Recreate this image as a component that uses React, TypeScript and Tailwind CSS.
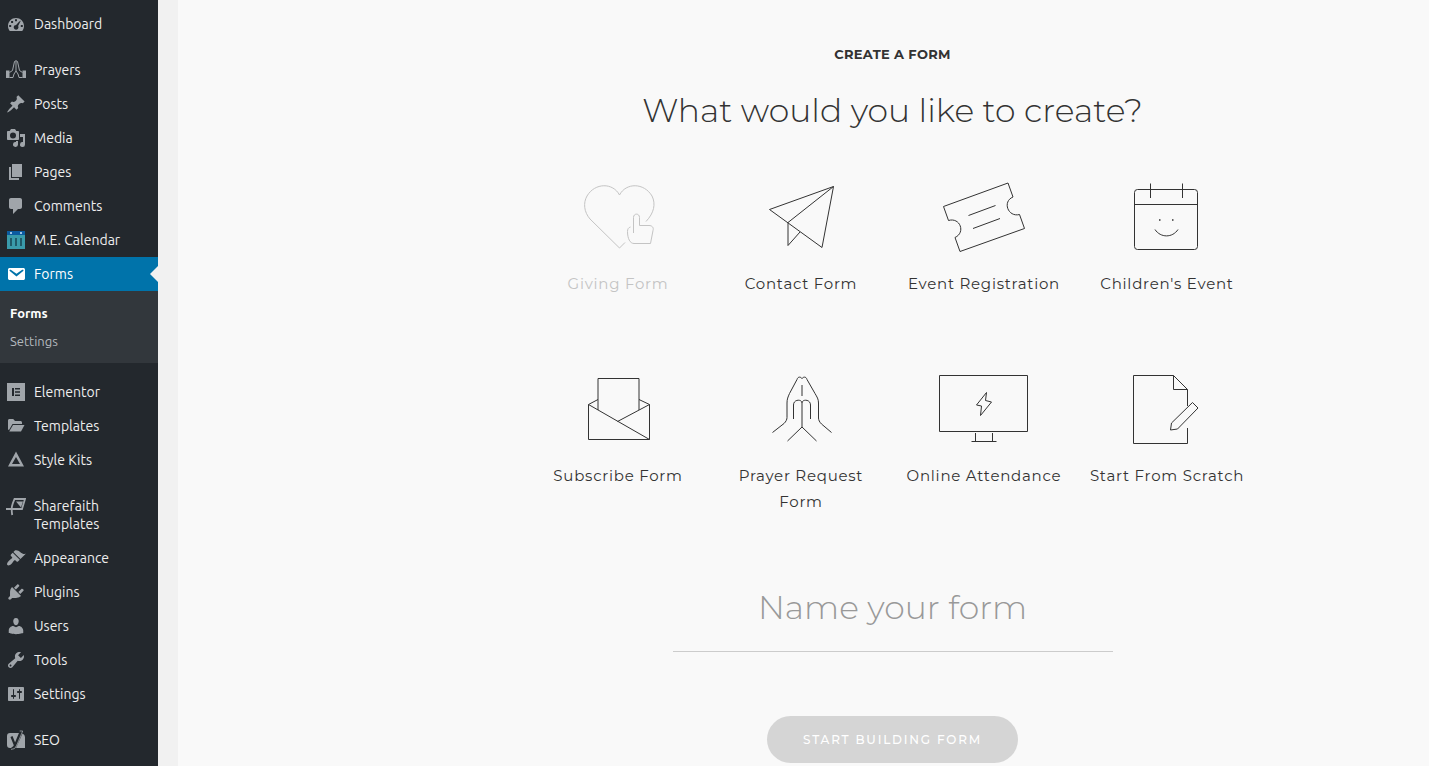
import type { ReactNode } from "react";

type IconProps = { children: ReactNode };

/* ---------- SIDEBAR ICONS (20x20 grid) ---------- */

function MenuIcon({ children }: IconProps) {
  return (
    <svg
      viewBox="0 0 20 20"
      className="h-5 w-5 shrink-0"
      fill="currentColor"
      aria-hidden="true"
    >
      {children}
    </svg>
  );
}

const DashboardIcon = (
  <MenuIcon>
    <path
      fillRule="evenodd"
      d="M3.8 17h12.4c1.1-1.5 1.8-3.2 1.8-5.1C18 7.500 14.400 4 10 4S2 7.500 2 11.900c0 1.900.700 3.700 1.800 5.100zM9 5.200h2v2H9zM5.100 7h2v2h-2zM3.200 11h2v2h-2zm11.600 0h2v2h-2zM13 7.800l1.900-1.200-2.800 5.400c.6.900.5 2.200-.3 3-.9.900-2.500.9-3.400 0s-.9-2.500 0-3.400c.5-.5 1.100-.7 1.700-.7z"
    />
  </MenuIcon>
);

const PrayersIcon = (
  <MenuIcon>
    <path d="M0 10.500h3.500V18H0zM16.500 10.500H20V18h-3.500z" />
    <path
      fill="none"
      stroke="currentColor"
      strokeWidth="1"
      d="M3.500 12.500 6.500 10.500 8.500 1.500Q9 .5 10 1v10L8 14l-1 3.500H3.500M16.500 12.500l-3-2L11.500 1.500Q11 .5 10 1M10 11l2 3 1 3.500h3.500"
    />
  </MenuIcon>
);

const PostsIcon = (
  <MenuIcon>
    <path d="M10.440 3.020l1.820-1.820 6.360 6.350-1.830 1.820c-1.050-.680-2.480-.570-3.410.360l-.750.750c-.920.930-1.040 2.350-.350 3.410l-1.830 1.820-2.410-2.410-2.800 2.790c-.420.420-3.380 2.710-3.800 2.290s1.860-3.390 2.280-3.810l2.790-2.790L4.100 9.360l1.830-1.820c1.050.690 2.480.570 3.400-.360l.750-.750c.930-.920 1.050-2.350.360-3.410z" />
  </MenuIcon>
);

const MediaIcon = (
  <MenuIcon>
    <path
      fillRule="evenodd"
      d="M13 11V4c0-.550-.450-1-1-1h-1.670L9 1H5L3.670 3H2c-.550 0-1 .450-1 1v7c0 .550.450 1 1 1h10c.550 0 1-.450 1-1zM7 4.500a3 3 0 1 0 0 6 3 3 0 0 0 0-6z"
    />
    <path d="M14 6h5v10.500a2.500 2.500 0 1 1-2-2.450V9h-3zM12 13v3.500A2.500 2.500 0 1 1 10 14v-1z" />
  </MenuIcon>
);

const PagesIcon = (
  <MenuIcon>
    <path d="M6 15V2h10v13H6zm-1 1h8v2H3V5h2v11z" />
  </MenuIcon>
);

const CommentsIcon = (
  <MenuIcon>
    <path d="M5 2h9c1.100 0 2 .900 2 2v7c0 1.100-.900 2-2 2h-2l-5 5v-5H5c-1.100 0-2-.900-2-2V4c0-1.100.900-2 2-2z" />
  </MenuIcon>
);

const CalendarIcon = (
  <MenuIcon>
    <path fill="#0b5ba0" d="M1 1h18v4H1z" />
    <path fill="#3a9bab" d="M1 5h18v14H1z" />
    <path fill="#9ec3e6" d="M4 2h2v2H4zM14 2h2v2h-2z" />
    <path fill="#1f5a69" d="M4 8h2v8H4zM9 8h2v8H9zM14 8h2v8h-2z" />
  </MenuIcon>
);

const FormsIcon = (
  <MenuIcon>
    <path d="M3.870 4h13.250C18.370 4 19 4.590 19 5.790v8.420c0 1.190-.630 1.790-1.880 1.790H3.870c-1.250 0-1.880-.600-1.880-1.790V5.790c0-1.200.630-1.790 1.880-1.790zm6.620 8.600l6.740-5.530c.240-.200.430-.660.130-1.070-.290-.410-.820-.420-1.170-.170l-5.700 3.860L4.800 5.830c-.350-.250-.880-.240-1.170.170-.300.410-.110.870.130 1.070z" />
  </MenuIcon>
);

const ElementorIcon = (
  <MenuIcon>
    <path
      fillRule="evenodd"
      d="M1 1h18v18H1zM6 6v8h2V6zm3 0v1.600h5V6zm0 3.200v1.600h5V9.200zm0 3.200V14h5v-1.600z"
    />
  </MenuIcon>
);

const TemplatesIcon = (
  <MenuIcon>
    <path d="M2 13.500V4.500C2 3.700 2.600 3 3.500 3h3.700L9 5h5.500c.8 0 1.500.7 1.500 1.500V8H6.500L3 14z" />
    <path d="M7 9h11.500L15 15.500H3.200z" />
  </MenuIcon>
);

const StyleKitsIcon = (
  <MenuIcon>
    <path fillRule="evenodd" d="M10 1.500l8 15H2zm0 5.500L6 14h8z" />
  </MenuIcon>
);

const SharefaithIcon = (
  <MenuIcon>
    <path
      fill="none"
      stroke="currentColor"
      strokeWidth="1.800"
      d="M0 13h16L19 3H8.500C6 9 5 11 6.200 19"
    />
    <path d="M10 5.500h7l-2 6z" />
  </MenuIcon>
);

const AppearanceIcon = (
  <MenuIcon>
    <path d="M14.480 11.060L7.410 3.990l1.500-1.500c.5-.56 2.300-.47 3.510.32 1.210.8 1.430 1.280 2.910 2.100 1.180.64 2.450 1.260 4.450.85zm-.71.71L6.700 4.700 4.930 6.470c-.39.390-.39 1.020 0 1.410l1.060 1.060c.39.390.39 1.030 0 1.420-.6.600-1.430 1.110-2.210 1.690-.35.260-.7.530-1.010.84C1.430 14.230.4 16.080 1.400 17.070c.99 1 2.840-.03 4.180-1.360.31-.31.58-.66.850-1.020.57-.78 1.080-1.610 1.690-2.210.39-.39 1.020-.39 1.410 0l1.060 1.060c.39.390 1.020.39 1.410 0z" />
  </MenuIcon>
);

const PluginsIcon = (
  <MenuIcon>
    <path d="M13.110 4.360L9.870 7.600 8 5.730l3.240-3.240c.35-.34 1.050-.2 1.560.32.520.51.660 1.210.310 1.550zm-8 1.770l.91-1.120 9.010 9.010-1.190.84c-.71.710-2.630 1.160-3.820 1.160H6.140L4.900 17.260c-.59.590-1.540.59-2.120 0-.59-.58-.59-1.530 0-2.120l1.240-1.240v-3.880c0-1.130.400-3.190 1.090-3.890zm7.260 3.970l3.240-3.240c.34-.35 1.040-.21 1.550.31.520.51.660 1.210.31 1.550l-3.240 3.250z" />
  </MenuIcon>
);

const UsersIcon = (
  <MenuIcon>
    <path d="M10 9.250c-2.270 0-2.730-3.440-2.730-3.440C7 4.020 7.820 2 9.970 2c2.160 0 2.980 2.020 2.710 3.810 0 0-.41 3.440-2.680 3.440z" />
    <path d="M10 11.300L12.720 10c2.390 0 4.520 2.330 4.520 4.530v2.490s-3.650 1.130-7.240 1.130c-3.650 0-7.240-1.130-7.240-1.130v-2.490c0-2.250 1.940-4.480 4.470-4.480z" />
  </MenuIcon>
);

const ToolsIcon = (
  <MenuIcon>
    <path
      fillRule="evenodd"
      d="M16.680 9.770c-1.340 1.340-3.300 1.670-4.950.99l-5.410 6.520c-.99.99-2.590.99-3.580 0s-.99-2.590 0-3.570l6.520-5.420c-.68-1.650-.35-3.610.99-4.950 1.280-1.280 3.120-1.620 4.720-1.060l-2.890 2.890 2.820 2.820 2.860-2.870c.53 1.580.18 3.390-1.080 4.650zM3.810 16.210c.4.390 1.040.39 1.430 0 .4-.4.4-1.040 0-1.430-.39-.4-1.030-.4-1.430 0-.39.390-.39 1.030 0 1.430z"
    />
  </MenuIcon>
);

const SettingsIcon = (
  <MenuIcon>
    <path
      fillRule="evenodd"
      d="M18 16V4c0-.55-.45-1-1-1H3c-.55 0-1 .45-1 1v12c0 .55.45 1 1 1h14c.55 0 1-.45 1-1zM8 11h1c.55 0 1 .45 1 1s-.45 1-1 1H8v1.500c0 .28-.22.5-.5.5s-.5-.22-.5-.5V13H6c-.55 0-1-.45-1-1s.45-1 1-1h1V5.500c0-.28.22-.5.5-.5s.5.220.5.500V11zm5-2h-1c-.55 0-1-.45-1-1s.45-1 1-1h1V5.500c0-.28.220-.5.500-.5s.5.220.5.500V7h1c.55 0 1 .45 1 1s-.45 1-1 1h-1v5.500c0 .28-.22.5-.5.5s-.5-.22-.5-.5z"
    />
  </MenuIcon>
);

const SeoIcon = (
  <MenuIcon>
    <path d="M4 3h10.500L10 16 9 18H4a3 3 0 0 1-3-3V6a3 3 0 0 1 3-3zM16.500 3.500Q19 4.500 19 7v11H10z" />
    <path
      fill="none"
      stroke="#23282d"
      strokeWidth="2.200"
      d="M5.500 6.500l3.200 8M5.500 18.300q2.500 0 3.700-3.300L14.800 1.500"
    />
    <path
      fill="none"
      stroke="currentColor"
      strokeWidth=".8"
      d="M13.700 1h3L10.500 16Q9 19.600 5 19.400"
    />
  </MenuIcon>
);

/* ---------- FORM TYPE DRAWINGS ---------- */

function Drawing({ children }: IconProps) {
  return (
    <svg
      viewBox="0 0 100 80"
      className="h-20 w-[100px]"
      fill="none"
      stroke="currentColor"
      strokeWidth="1"
      strokeLinejoin="round"
      aria-hidden="true"
    >
      {children}
    </svg>
  );
}

const GivingDrawing = (
  <Drawing>
    <path d="M57 66.500 51.500 72 22 43C16 36 15 27 19 20 27 6.500 45 6.500 51.500 19 58 6.500 76 6.500 84 20c4 8 2 17-6 25.500" />
    <path d="M65.500 57V41.500c0-4.500 6-4.500 6 0V49.500h9.500c3 0 5 2 4 5L82.500 67.500H66c-4 0-6.500-5-6.500-12 0-2.500 1-4 3-4.500" />
  </Drawing>
);

const ContactDrawing = (
  <Drawing>
    <path d="M18.500 33.500 82.500 10.500 71 71.500zM82.500 10.500 37 46.500V69.500L49 56" />
  </Drawing>
);

const RegistrationDrawing = (
  <Drawing>
    <path d="M9.500 30.500 74 7l5 14c-11 4.500-5 20.500 6.500 17.500L90.500 52.500 26 75.500 21 61.500C32 56.500 26 41 14.500 44.500zM34.500 39.500 61.500 29.500M39 52.500 66 42.500" />
  </Drawing>
);

const ChildrenDrawing = (
  <Drawing>
    <rect x="17.500" y="13.500" width="63" height="60" rx="3" />
    <path d="M17.500 28.500h63M33.500 7.500v14.500M65.500 7.500v14.500M38 53.500c5.500 8.500 17.500 8.500 23 0" />
    <path strokeWidth="1.500" d="M42 44h1.500M55 44h1.500" />
  </Drawing>
);

const SubscribeDrawing = (
  <Drawing>
    <path d="M20.500 36.500V71.500H81.500V36.500L49.500 53.500M20.500 36.500 81.500 71.500M30 42V10.500H71V42M30 31.500l-9.500 5M71 31.500l10.500 5" />
  </Drawing>
);

const PrayerDrawing = (
  <Drawing>
    <path d="M21.500 64.500 33 55.500c2-2 3-4 3-6V35c0-4 1-6 2.500-9.500L46 11.500C47 8 50 9 51 10.500 52 9 55 8 56 11.500l8 14C66 29 67.500 31 67.500 35v15c0 2 1 4 3 6l10 8.500" />
    <path d="M51 17v11M42.500 51V37c0-6 8.500-6 8.500-2V59M51 35c0-4 8.500-4 8.500 2V51M36.500 73 51 59 65.500 73" />
  </Drawing>
);

const AttendanceDrawing = (
  <Drawing>
    <path d="M5.500 7.500h88v56h-88zM41.500 65v8M58.500 65v8M37.500 73.500h25M52.500 24.500 42.500 37l5 1-1 9.500 11-13.500-6-1.500z" />
  </Drawing>
);

const ScratchDrawing = (
  <Drawing>
    <path d="M70.500 38V21.500L56.500 7.500h-40v68h54V60M56.500 7.500v14h14M53.500 62l1-7L75.500 34.500l5.500 5.500-20.500 21z" />
  </Drawing>
);

/* ---------- DATA ---------- */

const menuGroups = [
  [{ label: "Dashboard", icon: DashboardIcon }],
  [
    { label: "Prayers", icon: PrayersIcon },
    { label: "Posts", icon: PostsIcon },
    { label: "Media", icon: MediaIcon },
    { label: "Pages", icon: PagesIcon },
    { label: "Comments", icon: CommentsIcon },
    { label: "M.E. Calendar", icon: CalendarIcon },
    { label: "Forms", icon: FormsIcon, current: true },
  ],
  [
    { label: "Elementor", icon: ElementorIcon },
    { label: "Templates", icon: TemplatesIcon },
    { label: "Style Kits", icon: StyleKitsIcon },
  ],
  [
    { label: "Sharefaith Templates", icon: SharefaithIcon },
    { label: "Appearance", icon: AppearanceIcon },
    { label: "Plugins", icon: PluginsIcon },
    { label: "Users", icon: UsersIcon },
    { label: "Tools", icon: ToolsIcon },
    { label: "Settings", icon: SettingsIcon },
  ],
  [{ label: "SEO", icon: SeoIcon }],
];

const formTypes = [
  { label: "Giving Form", drawing: GivingDrawing, disabled: true },
  { label: "Contact Form", drawing: ContactDrawing },
  { label: "Event Registration", drawing: RegistrationDrawing },
  { label: "Children's Event", drawing: ChildrenDrawing },
  { label: "Subscribe Form", drawing: SubscribeDrawing },
  { label: "Prayer Request Form", drawing: PrayerDrawing },
  { label: "Online Attendance", drawing: AttendanceDrawing },
  { label: "Start From Scratch", drawing: ScratchDrawing },
];

type MenuItemProps = { label: string; icon: ReactNode; current?: boolean };

function MenuItem({ label, icon, current }: MenuItemProps) {
  return (
    <li>
      <a
        href="#"
        className={
          current
            ? "relative flex gap-2 bg-[#0073aa] py-2 pl-1.5 pr-6 text-white"
            : "flex gap-2 py-2 pl-1.5 pr-6 text-[#eeeeee]"
        }
      >
        <span
          className={
            current
              ? "-my-px h-5 text-white"
              : "-my-px h-5 text-[#a0a5aa]"
          }
        >
          {icon}
        </span>
        <span>{label}</span>
        {current && (
          <span className="absolute right-0 top-1/2 -translate-y-1/2 border-8 border-transparent border-r-[#f1f1f1]" />
        )}
      </a>
      {current && (
        <ul className="bg-[#32373c] px-2.5 py-2 text-[13px] leading-7">
          <li>
            <a href="#" className="block font-bold text-white">
              Forms
            </a>
          </li>
          <li>
            <a href="#" className="block text-[#b4b9be]">
              Settings
            </a>
          </li>
        </ul>
      )}
    </li>
  );
}

function Sidebar() {
  return (
    <nav className="flex w-[158px] shrink-0 flex-col gap-3 bg-[#23282d] pt-[7px] font-['Ubuntu','Open_Sans',sans-serif] text-sm leading-[18px]">
      {menuGroups.map((group) => (
        <ul key={group[0].label}>
          {group.map((item) => (
            <MenuItem key={item.label} {...item} />
          ))}
        </ul>
      ))}
    </nav>
  );
}

export default function App() {
  return (
    <div className="flex min-h-screen bg-[#f1f1f1]">
      <Sidebar />

      <main className="ml-5 flex-1 bg-[#f9f9f9] pl-[178px] font-['Montserrat','Inter',sans-serif] text-[#333333]">
        <form className="flex flex-col items-center pt-11">
          <h2 className="text-[13px] font-bold uppercase leading-5 tracking-wide">
            Create a form
          </h2>
          <h1 className="mt-6 text-center text-[33px] font-light leading-11">
            What would you like to create?
          </h1>

          {/* FORM TYPES */}
          <div className="mt-11 grid w-full max-w-[732px] grid-cols-4 gap-y-10">
            {formTypes.map((type) => (
              <button
                key={type.label}
                type="button"
                disabled={type.disabled}
                className="flex min-h-[152px] flex-col items-center px-3 text-[15px] leading-[26px] tracking-wider disabled:text-[#c4c4c4]"
              >
                {type.drawing}
                <span className="mt-[15px]">{type.label}</span>
              </button>
            ))}
          </div>

          {/* FORM NAME */}
          <input
            type="text"
            aria-label="Name your form"
            placeholder="Name your form"
            className="mt-[42px] h-[90px] w-full max-w-[440px] border-b border-[#cccccc] bg-transparent text-center text-[33px] font-light placeholder:text-[#999999] focus:outline-none"
          />

          <button
            type="submit"
            disabled
            className="mt-16 h-[47px] rounded-full bg-[#d5d5d5] px-9 text-xs font-medium uppercase tracking-[0.15em] text-white"
          >
            Start building form
          </button>
        </form>
      </main>
    </div>
  );
}
